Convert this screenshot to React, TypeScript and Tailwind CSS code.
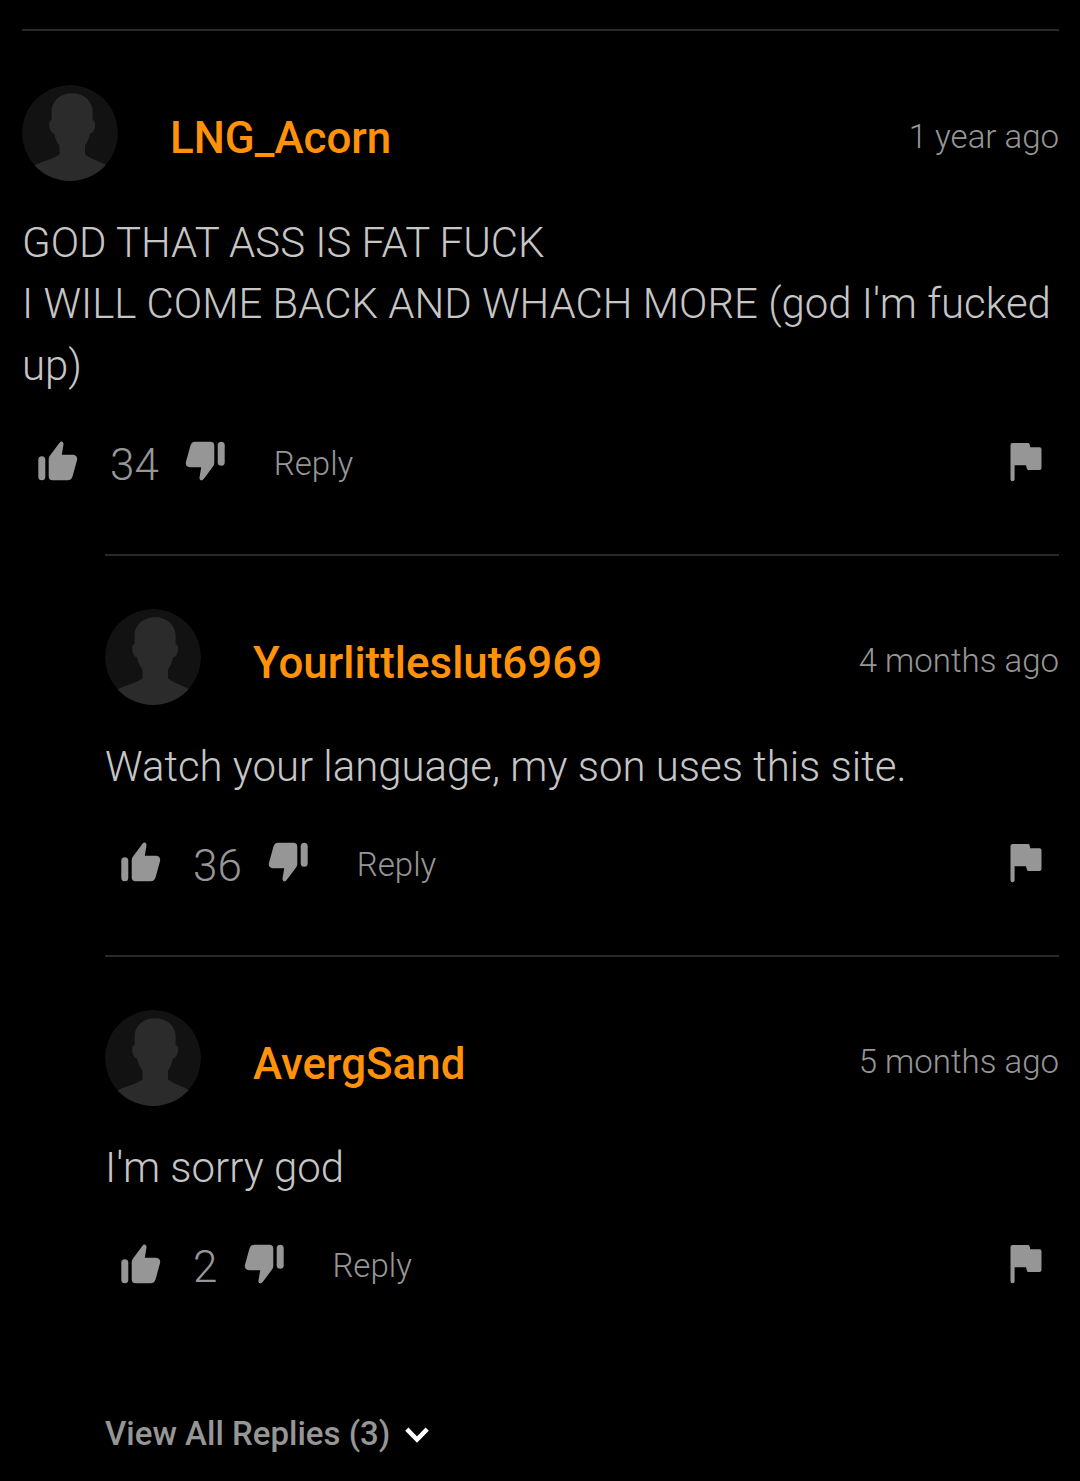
import React from "react";

function Avatar() {
  return (
    <svg className="size-24 shrink-0 rounded-full" viewBox="0 0 96 96" aria-hidden="true">
      <circle cx="48" cy="48" r="48" fill="#121212" />
      <path
        fill="#2b2b2b"
        d="M50 8.300C38 8.300 29.500 16 29.500 27L29.700 35C27 35.500 27 39 27.300 41.500C27.800 45.500 29.500 48 32 48.500C33 53 35 57.500 37.500 60.500V69.500C31 74 21.500 76 12 80.500A48 48 0 0 0 85 80.500C77 76 69 74 63 69.500V60.500C65.500 57.500 67 53 68 48.500C71 48 72.500 45 73 41.500C73.300 38.500 73 35.500 70.500 35L70.700 27C70.700 16 62 8.300 50 8.300Z"
      />
    </svg>
  );
}

function Thumb({ down = false }: { down?: boolean }) {
  return (
    <svg
      className={down ? "size-10 shrink-0 rotate-180" : "size-10 shrink-0"}
      viewBox="0 0 40 40"
      fill="#969696"
      aria-hidden="true"
    >
      <rect x="0.300" y="15.200" width="7" height="24" rx="3.500" />
      <path d="M24.100 0.700C25.500 1.200 25.800 2.700 25.300 4.700L23.800 13.700H34.300C38.300 13.700 39.800 16.200 39 19.200L34.600 35.200C33.800 38 32.300 39.200 29.800 39.200H14.500C12 39.200 10.700 37.700 10.700 35.200V18.500C10.700 16.500 11.200 15.500 12.200 14.200L21.300 1.900C22.300 0.700 23.300 0.400 24.100 0.700Z" />
    </svg>
  );
}

function Flag() {
  return (
    <svg className="h-10 w-8 shrink-0" viewBox="0 0 32 40" fill="#969696" aria-hidden="true">
      <path d="M0.500 3Q0.500 1 2.500 1H18Q19.300 1 19.600 2.300L20.300 5.300H29.500Q31.500 5.300 31.500 7.300V26Q31.500 28 29.500 28H18.500Q17.200 28 16.900 26.700L16 23.300H4.600V37.500Q4.600 39.300 2.550 39.300Q0.500 39.300 0.500 37.500Z" />
    </svg>
  );
}

type CommentProps = {
  name: string;
  time: string;
  lines: string[];
  votes: number;
  reply?: boolean;
};

function Comment({ name, time, lines, votes, reply = false }: CommentProps) {
  return (
    <article
      className={
        reply
          ? "border-t-2 border-[#292929] pt-[53px] pb-[58.3px]"
          : "border-t-2 border-[#292929] pt-[54px] pb-[58.3px]"
      }
    >
      <header className="flex h-24 items-center">
        <Avatar />
        <h2
          className={
            reply
              ? "ml-[52px] pt-3 text-[43.9px] leading-[52px] font-medium text-[#ff9209]"
              : "ml-[52px] pt-[10px] text-[43.9px] leading-[52px] font-medium text-[#ff9209]"
          }
        >
          {name}
        </h2>
        <time className="ml-auto pt-[7px] text-[33px] leading-10 text-[#969696]">{time}</time>
      </header>
      <div className="mt-[31px] text-[41.95px] leading-[61.4px] text-[#c6c6c6]">
        {lines.map((line) => (
          <p key={line}>{line}</p>
        ))}
      </div>
      <footer className="mt-[35.5px] flex h-16 items-center pr-[17px] pl-[16px]">
        <div className="flex items-center pb-[5px]">
          <Thumb />
        </div>
        <span className="ml-[32px] pt-[2px] text-[44px] leading-[52px] text-[#969696]">{votes}</span>
        <div className="ml-[26.5px] flex items-center pb-[5px]">
          <Thumb down />
        </div>
        <span className="ml-[48.5px] text-[33px] leading-10 text-[#969696]">Reply</span>
        <div className="ml-auto flex items-center pb-[4px]">
          <Flag />
        </div>
      </footer>
    </article>
  );
}

export default function App() {
  return (
    <main className="h-[1481px] w-[1080px] overflow-hidden bg-black pt-[29px] pr-[21px] pl-[22px] font-['Roboto',sans-serif] font-light">
      <Comment
        name="LNG_Acorn"
        time="1 year ago"
        lines={["GOD THAT ASS IS FAT FUCK", "I WILL COME BACK AND WHACH MORE (god I'm fucked up)"]}
        votes={34}
      />
      <section className="pl-[83px]">
        <Comment
          reply
          name="Yourlittleslut6969"
          time="4 months ago"
          lines={["Watch your language, my son uses this site."]}
          votes={36}
        />
        <Comment reply name="AvergSand" time="5 months ago" lines={["I'm sorry god"]} votes={2} />
        <button className="mt-[58px] flex items-center text-[33px] leading-10 font-medium text-[#969696]">
          View All Replies (3)
          <svg className="mt-[1px] ml-[15px] h-4 w-6" viewBox="0 0 24 16" fill="none" stroke="#fff" strokeWidth="4.500" aria-hidden="true">
            <path d="M1.800 2.200L12 12.500L22.200 2.200" />
          </svg>
        </button>
      </section>
    </main>
  );
}
